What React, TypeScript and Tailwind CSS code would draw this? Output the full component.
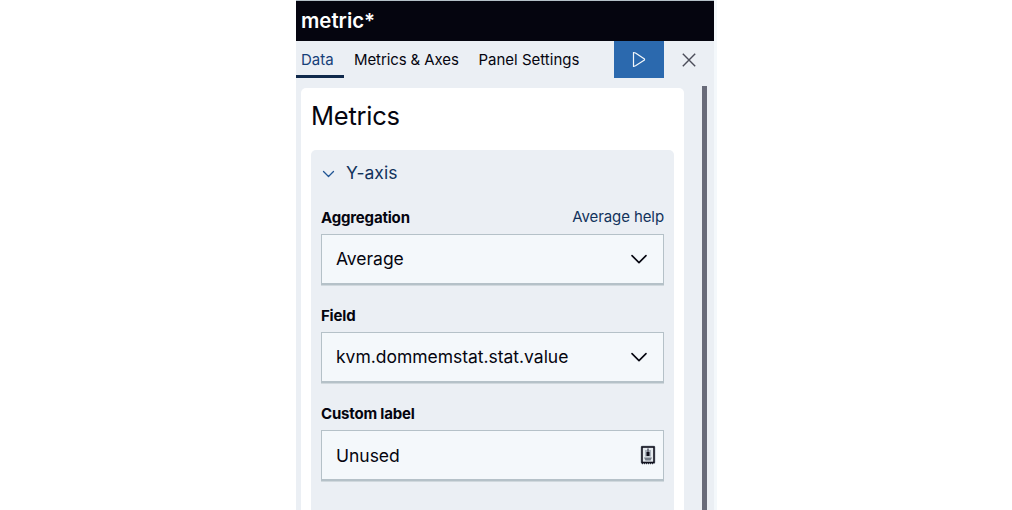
import type { ReactNode } from "react";

function Chevron() {
  return (
    <svg width="16" height="10" viewBox="0 0 16 10" fill="none" stroke="#05050f" strokeWidth="1.6" strokeLinecap="round" strokeLinejoin="round">
      <path d="M1 1.6 8 8.6l7-7" />
    </svg>
  );
}

function ContactIcon() {
  return (
    <svg width="16" height="20" viewBox="0 0 16 20" fill="none">
      <rect x="0.5" y="0.5" width="15" height="18.5" rx="2" fill="#b8c2ca" />
      <rect x="2" y="2" width="12" height="15.5" fill="#e4eaee" stroke="#10101c" strokeWidth="1.6" />
      <path d="M2 18.7h12" stroke="#10101c" strokeWidth="1" strokeDasharray="1 1" />
      <rect x="5" y="5" width="6" height="6.5" fill="#aab3bd" />
      <rect x="7" y="3.5" width="2" height="4" fill="#777a88" />
      <rect x="6.5" y="7" width="3" height="4" fill="#10101c" />
      <path d="M4 12.5h8l-1.5 3h-5z" fill="#747c88" />
    </svg>
  );
}

function Field({ label, value, help, icon, iconPad = "pr-4", valuePad = "" }: { label: string; value: string; help?: string; icon: ReactNode; iconPad?: string; valuePad?: string }) {
  return (
    <div className="h-[98px]">
      <div className="flex h-[28px] items-start justify-between">
        <span className="pt-[2px] text-[15px] leading-5 font-bold tracking-[-0.18px]">{label}</span>
        {help && <a className="pt-[1px] text-[15px] leading-5 tracking-[-0.1px] text-[#12335c]">{help}</a>}
      </div>
      <div className={`flex h-[51px] items-center justify-between border border-b-2 border-[#b5c1c8] bg-[#f4f8fb] pl-[14px] shadow-[0_1px_0_#d0d8dd] ${iconPad}`}>
        <span className={`text-[17.5px] leading-6 tracking-[-0.02px] ${valuePad}`}>{value}</span>
        {icon}
      </div>
    </div>
  );
}

export default function App() {
  return (
    <div className="flex h-[510px] w-[1012px] overflow-hidden bg-white pl-[296px] font-['Inter',sans-serif] text-[#05050f]">
      <div className="flex w-[418px] shrink-0 flex-col bg-[#ebeff4]">
        <header className="flex h-[41px] shrink-0 items-center border-t border-[#b5c1c8] bg-[#05050f] pl-[5px] text-[20.4px] font-semibold text-white">
          <span>metric*</span>
        </header>
        <nav className="flex h-[37px] shrink-0 text-[15px] leading-5">
          <div className="h-[37px] w-[48px] border-b-[3px] border-[#10294b] pt-[9px] pl-[5px] text-[#164078]">Data</div>
          <div className="w-[124px] pt-[9px] pl-[10px] tracking-[-0.1px] whitespace-nowrap">Metrics &amp; Axes</div>
          <div className="w-[146px] pt-[9px] pl-[10.5px] whitespace-nowrap">Panel Settings</div>
          <button className="flex w-[50px] items-center justify-center bg-[#2b69ae]">
            <svg width="14" height="17" viewBox="0 0 14 17" fill="none" stroke="#f4f8fb" strokeWidth="1.2" strokeLinejoin="round">
              <path d="M1.5 1.5v14l2-.8 9-5.7V8l-9-6z" />
            </svg>
          </button>
          <button className="flex w-[50px] items-center justify-center">
            <svg width="14" height="14" viewBox="0 0 14 14" stroke="#4b4d59" strokeWidth="1.4">
              <path d="m.8.8 12.4 12.4M13.2.8.8 13.2" />
            </svg>
          </button>
        </nav>
        <div className="flex min-h-0 flex-1 items-stretch pt-2 pl-[5px]">
          <section className="mt-[2px] w-[383px] rounded-t-[5px] bg-white px-[10px] pt-3">
            <h1 className="h-[50px] text-[25.5px] leading-8 tracking-[-0.25px]">Metrics</h1>
            <div className="h-[400px] rounded-t-[5px] bg-[#ebeff4] px-[10px]">
              <div className="flex h-[56px] items-center pb-[11px] pl-[1px] text-[#12335c]">
                <svg className="mt-[3px]" width="13" height="8" viewBox="0 0 13 8" fill="none" stroke="#205594" strokeWidth="1.3" strokeLinecap="round" strokeLinejoin="round">
                  <path d="m1.5 1.5 5 5 5-5" />
                </svg>
                <span className="pl-[11px] text-[17.5px] leading-6">Y-axis</span>
              </div>
              <Field label="Aggregation" value="Average" help="Average help" icon={<Chevron />} />
              <Field label="Field" value="kvm.dommemstat.stat.value" icon={<Chevron />} />
              <Field label="Custom label" value="Unused" icon={<ContactIcon />} iconPad="pr-[7px]" valuePad="pt-[2px]" />
            </div>
          </section>
          <div className="ml-[18px] w-[5px] bg-[#696b79]" />
        </div>
      </div>
      <div className="w-[3px] bg-[#f4f8fb]" />
    </div>
  );
}
